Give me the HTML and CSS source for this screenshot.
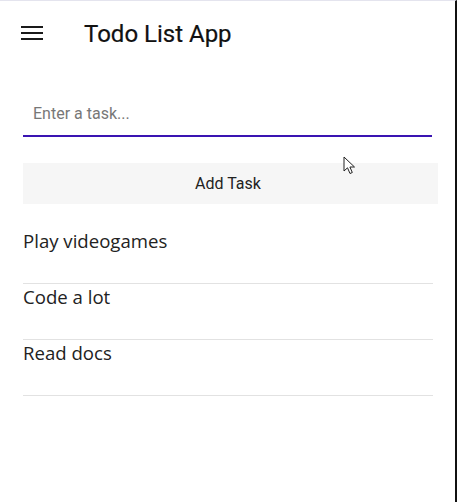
FILE: index.html
```html
<!DOCTYPE html>
<html lang="en">
<head>
    <meta charset="UTF-8">
    <meta name="viewport" content="width=device-width, initial-scale=1.0">
    <title>Todo List App</title>
    <link rel="stylesheet" href="styles.css">
</head>
<body>
    <div class="screen">
        <header class="app-bar">
            <svg class="menu-icon" width="22" height="16" viewBox="0 0 22 16">
                <rect x="0" y="1" width="22" height="2" fill="#1a1a1a"/>
                <rect x="0" y="7" width="22" height="2" fill="#1a1a1a"/>
                <rect x="0" y="13" width="22" height="2" fill="#1a1a1a"/>
            </svg>
            <h1 class="app-title">Todo List App</h1>
        </header>

        <div class="task-form">
            <input class="task-input" type="text" placeholder="Enter a task...">
            <button class="add-button">Add Task</button>
        </div>

        <ul class="task-list">
            <li class="task-item">Play videogames</li>
            <li class="task-item">Code a lot</li>
            <li class="task-item">Read docs</li>
        </ul>

        <!-- mouse pointer captured in the screenshot -->
        <svg class="pointer" width="14" height="20" viewBox="0 0 14 20">
            <path d="M1 1 L1 15 L4.5 11.8 L7 17.5 L9.3 16.5 L6.9 11 L11.5 11 Z" fill="#fff" stroke="#222" stroke-width="1" stroke-linejoin="round"/>
        </svg>
    </div>
</body>
</html>
```

FILE: styles.css
```css
body {
    margin: 0;
    background: #fff;
    font-family: Roboto, "Noto Sans", sans-serif;
}

.screen {
    position: relative;
    width: 455px;
    height: 501px;
    border-top: 1px solid #e4e4ee;
    border-right: 2px solid #111;
    background: #fff;
    overflow: hidden;
}

.app-bar {
    display: flex;
    align-items: center;
    height: 66px;
    padding-left: 21px;
    gap: 41px;
}

.menu-icon {
    display: block;
    margin-top: -2px;
}

.app-title {
    margin: 0;
    font-size: 24px;
    font-weight: 400;
    color: #111;
    -webkit-text-stroke: 0.2px #111;
}

.task-form {
    display: flex;
    flex-direction: column;
    align-items: flex-start;
    margin-top: 24px;
    padding-left: 23px;
}

.task-input {
    box-sizing: border-box;
    width: 409px;
    height: 46px;
    padding: 0 10px;
    border: none;
    border-bottom: 2px solid #3a14b2;
    outline: none;
    font-family: Roboto, sans-serif;
    font-size: 16px;
    color: #222;
    background: transparent;
}

.task-input::placeholder {
    color: #777;
}

.add-button {
    width: 415px;
    height: 41px;
    margin-top: 26px;
    border: none;
    background: #f6f6f6;
    font-family: Roboto, sans-serif;
    font-size: 16px;
    color: #222;
    padding: 0 5px 0 0;
}

.task-list {
    list-style: none;
    margin: 24px 0 0 23px;
    padding: 0;
    width: 410px;
}

.task-item {
    font-family: "Open Sans", sans-serif;
    font-size: 18.6px;
    line-height: 25px;
    color: #222;
    padding-bottom: 30px;
    border-bottom: 1px solid #e2e2e2;
}

.pointer {
    position: absolute;
    left: 343px;
    top: 155px;
}
```
